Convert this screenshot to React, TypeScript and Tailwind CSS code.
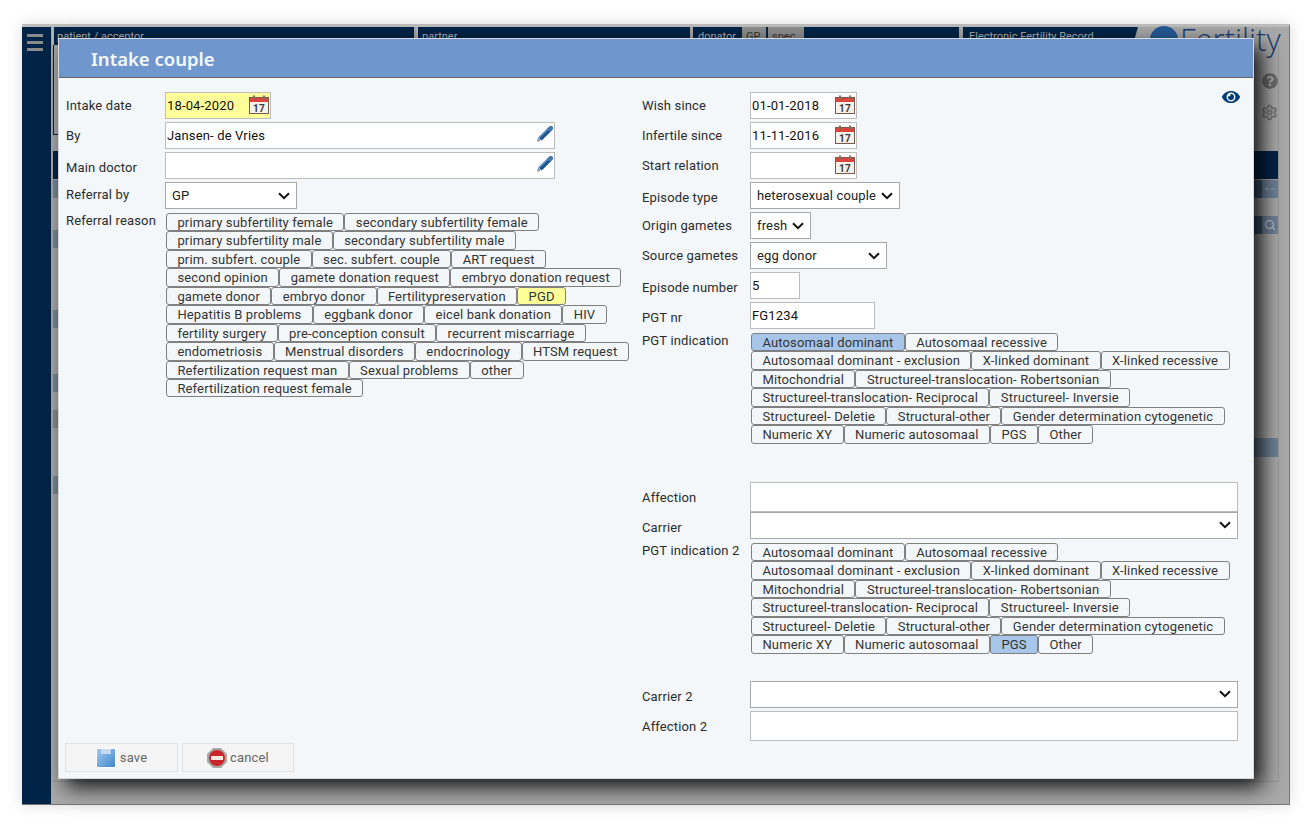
import { FaEye, FaQuestionCircle } from "react-icons/fa";
import { Minus, Plus, Search, Settings } from "lucide-react";

const referralReasons = [
  [["primary subfertility female"], ["secondary subfertility female"]],
  [["primary subfertility male"], ["secondary subfertility male"]],
  [["prim. subfert. couple"], ["sec. subfert. couple"], ["ART request"]],
  [["second opinion"], ["gamete donation request"], ["embryo donation request"]],
  [["gamete donor"], ["embryo donor"], ["Fertilitypreservation"], ["PGD", "yellow"]],
  [["Hepatitis B problems"], ["eggbank donor"], ["eicel bank donation"], ["HIV"]],
  [["fertility surgery"], ["pre-conception consult"], ["recurrent miscarriage"]],
  [["endometriosis"], ["Menstrual disorders"], ["endocrinology"], ["HTSM request"]],
  [["Refertilization request man"], ["Sexual problems"], ["other"]],
  [["Refertilization request female"]],
];

const indication = (first: string, last: string) => [
  [["Autosomaal dominant", first], ["Autosomaal recessive"]],
  [["Autosomaal dominant - exclusion"], ["X-linked dominant"], ["X-linked recessive"]],
  [["Mitochondrial"], ["Structureel-translocation- Robertsonian"]],
  [["Structureel-translocation- Reciprocal"], ["Structureel- Inversie"]],
  [["Structureel- Deletie"], ["Structural-other"], ["Gender determination cytogenetic"]],
  [["Numeric XY"], ["Numeric autosomaal"], ["PGS", last], ["Other"]],
];

function CalendarIcon() {
  return (
    <svg width="20" height="19" viewBox="0 0 20 19" className="-mt-[3px] shrink-0">
      <rect x="0.5" y="2.5" width="19" height="16" fill="#f4f1ea" stroke="#7a5a4c" />
      <rect x="1" y="3" width="18" height="4" fill="#d9443b" />
      <rect x="4" y="0.5" width="2" height="4" fill="#8a6a5c" />
      <rect x="14" y="0.5" width="2" height="4" fill="#8a6a5c" />
      <text x="10" y="16.5" textAnchor="middle" fontSize="10" fontWeight="700" fontFamily="Roboto, sans-serif" fill="#3a3a3a">
        17
      </text>
    </svg>
  );
}

function PenIcon() {
  return (
    <svg width="18" height="18" viewBox="0 0 20 20" className="-mr-px -mt-[3px] shrink-0">
      <path d="M1 19l1.5-5 3 3z" fill="#6f95b8" />
      <path d="M4.5 15.5L15.5 4.5" stroke="#1a5590" strokeWidth="5" />
      <path d="M3.5 14L14 3.5" stroke="#6f9fcd" strokeWidth="1.5" />
      <path d="M15.5 4.5l1-1" stroke="#3f78b0" strokeWidth="5" strokeLinecap="round" />
    </svg>
  );
}

function Chevron({ className }: { className: string }) {
  return (
    <svg width="12" height="8" viewBox="0 0 12 8" className={className}>
      <path d="M1 1.2l5 5 5-5" fill="none" stroke="#111" strokeWidth="2" />
    </svg>
  );
}

function SaveIcon() {
  return (
    <svg width="20" height="20" viewBox="0 0 20 20">
      <defs>
        <linearGradient id="floppy" x1="0" y1="0" x2="1" y2="1">
          <stop offset="0" stopColor="#a4cdf0" />
          <stop offset="1" stopColor="#3f85c8" />
        </linearGradient>
      </defs>
      <rect x="0.5" y="0.5" width="19" height="19" fill="url(#floppy)" stroke="#fff" />
      <rect x="5" y="1" width="10" height="5" fill="#c4dbef" />
    </svg>
  );
}

function CancelIcon() {
  return (
    <svg width="20" height="20" viewBox="0 0 20 20">
      <path d="M6 0h8l6 6v8l-6 6H6l-6-6V6z" fill="#a9a9a9" />
      <circle cx="10" cy="10" r="8" fill="#c9252b" />
      <rect x="4" y="8" width="12" height="4" fill="#f6e6e6" />
    </svg>
  );
}

function Label({ text, className = "pt-[4px]" }: { text: string; className?: string }) {
  return <div className={`shrink-0 leading-5 text-[#2b2b2b] ${className}`}>{text}</div>;
}

function Field({ width, height = "h-[27px]", value, bg = "bg-white", children }: { width: string; height?: string; value?: string; bg?: string; children?: React.ReactNode }) {
  return (
    <div className={`flex items-center justify-between border border-[#bcbcbc] pl-px pr-px text-[#111] ${width} ${height} ${bg}`}>
      <span>{value}</span>
      {children}
    </div>
  );
}

function Select({ width, value }: { width: string; value?: string }) {
  return (
    <div className={`flex h-[27px] items-center justify-between border border-[#a8a8a8] bg-white pl-[6px] pr-[6px] text-[#222] ${width}`}>
      <span>{value}</span>
      <Chevron className="shrink-0" />
    </div>
  );
}

function Tags({ rows }: { rows: string[][][] }) {
  return (
    <div className="ml-px flex flex-col">
      {rows.map((row, i) => (
        <div key={i} className="flex h-[18.45px]">
          {row.map(([text, state]) => (
            <div
              key={text}
              className={`h-[18.45px] rounded-[3px] border border-[#808080] px-[10.4px] leading-[18px] text-[#333] ${
                state === "yellow" ? "bg-[#ffff99]" : state === "blue" ? "bg-[#a8c6e9]" : ""
              }`}
            >
              {text}
            </div>
          ))}
        </div>
      ))}
    </div>
  );
}

function Row({ label, labelClass, labelWidth, className = "mb-[3px]", children }: { label: string; labelClass?: string; labelWidth: string; className?: string; children: React.ReactNode }) {
  return (
    <div className={`flex ${className}`}>
      <div className={`shrink-0 ${labelWidth}`}>
        <Label text={label} className={labelClass} />
      </div>
      {children}
    </div>
  );
}

function Modal() {
  const lw = "w-[99px]";
  const rw = "w-[108px]";
  return (
    <div className="absolute left-[58px] top-[38px] flex h-[741px] w-[1196px] flex-col border border-[#d5d9de] bg-[#f3f7fa] text-[13px] tracking-[0.15px] shadow-[8px_8px_20px_rgba(0,0,0,0.9)] [font-family:Roboto,sans-serif]">
      <div className="flex h-[39px] shrink-0 items-center border-b border-[#666] bg-[#7097cd] pl-[32px] pt-[2px] text-[18.5px] font-semibold tracking-normal text-[#f4f7fb] [font-family:'Noto_Sans',sans-serif]">
        Intake couple
      </div>
      <div className="relative flex flex-1 pt-[14px]">
        <div className="w-[576px] shrink-0 pl-[7px]">
          <Row label="Intake date" labelWidth={lw}>
            <Field width="w-[106px]" value="18-04-2020" bg="bg-[#ffff99]">
              <CalendarIcon />
            </Field>
          </Row>
          <Row label="By" labelWidth={lw}>
            <Field width="w-[390px]" value="Jansen- de Vries">
              <PenIcon />
            </Field>
          </Row>
          <Row label="Main doctor" labelClass="pt-[6px]" labelWidth={lw}>
            <Field width="w-[390px]">
              <PenIcon />
            </Field>
          </Row>
          <Row label="Referral by" labelClass="pt-[3px]" labelWidth={lw} className="mb-[4px]">
            <Select width="w-[132px]" value="GP" />
          </Row>
          <Row label="Referral reason" labelClass="-mt-[2px]" labelWidth={lw}>
            <Tags rows={referralReasons} />
          </Row>
        </div>
        <div className="flex-1 pl-[7px]">
          <Row label="Wish since" labelWidth={rw}>
            <Field width="w-[107px]" value="01-01-2018">
              <CalendarIcon />
            </Field>
          </Row>
          <Row label="Infertile since" labelWidth={rw}>
            <Field width="w-[107px]" value="11-11-2016">
              <CalendarIcon />
            </Field>
          </Row>
          <Row label="Start relation" labelWidth={rw}>
            <Field width="w-[107px]">
              <CalendarIcon />
            </Field>
          </Row>
          <Row label="Episode type" labelClass="pt-[6px]" labelWidth={rw}>
            <Select width="w-[150px]" value="heterosexual couple" />
          </Row>
          <Row label="Origin gametes" labelWidth={rw}>
            <Select width="w-[61px]" value="fresh" />
          </Row>
          <Row label="Source gametes" labelWidth={rw}>
            <Select width="w-[137px]" value="egg donor" />
          </Row>
          <Row label="Episode number" labelClass="pt-[6px]" labelWidth={rw}>
            <Field width="w-[50px]" value="5" />
          </Row>
          <Row label="PGT nr" labelClass="pt-[6px]" labelWidth={rw} className="mb-[4px]">
            <Field width="w-[125px]" value="FG1234" />
          </Row>
          <Row label="PGT indication" labelClass="-mt-[2px]" labelWidth={rw} className="mb-[38.3px]">
            <Tags rows={indication("blue", "")} />
          </Row>
          <Row label="Affection" labelClass="pt-[6px]" labelWidth={rw} className="">
            <Field width="w-[488px]" height="h-[30px]" />
          </Row>
          <Row label="Carrier" labelClass="pt-[6px]" labelWidth={rw} className="mb-[4px]">
            <Select width="w-[488px]" />
          </Row>
          <Row label="PGT indication 2" labelClass="-mt-[2px]" labelWidth={rw} className="mb-[27px]">
            <Tags rows={indication("", "blue")} />
          </Row>
          <Row label="Carrier 2" labelClass="pt-[6px]" labelWidth={rw}>
            <Select width="w-[488px]" />
          </Row>
          <Row label="Affection 2" labelClass="pt-[6px]" labelWidth={rw} className="">
            <Field width="w-[488px]" height="h-[30px]" />
          </Row>
        </div>
        <FaEye className="absolute right-[13px] top-[10px] text-[18px] text-[#003a75]" />
      </div>
      <div className="flex shrink-0 gap-[4px] pb-[6px] pl-[6px] text-[#666]">
        <div className="flex h-[29px] w-[113px] items-center justify-center gap-[4px] border border-[#e2e2e2] bg-[#f5f5f5]">
          <SaveIcon />
          save
        </div>
        <div className="flex h-[29px] w-[112px] items-center justify-center gap-[3px] border border-[#e2e2e2] bg-[#f5f5f5]">
          <CancelIcon />
          cancel
        </div>
      </div>
    </div>
  );
}

function Backdrop() {
  return (
    <div className="flex h-[781px] w-[1268px] border-r border-b border-t-[3px] border-r-[#777] border-b-[#777] border-t-[#bdbdbd] bg-[#a9a9a9] shadow-[0_0_14px_rgba(0,0,0,0.14)] [font-family:Roboto,sans-serif]">
      <div className="flex w-[29px] shrink-0 flex-col bg-[#002447] pl-[5px] pt-[7px]">
        <div className="flex w-[16px] flex-col gap-[4px]">
          <div className="h-[3px] bg-[#8b8b8b]" />
          <div className="h-[3px] bg-[#8b8b8b]" />
          <div className="h-[3px] bg-[#8b8b8b]" />
        </div>
      </div>
      <div className="flex min-w-0 flex-1 flex-col">
        <div className="flex h-[18px] shrink-0 pl-px text-[11px] leading-[20px] text-[#b5b5b5]">
          <div className="w-[362px] border-l-2 border-[#b5b5b5] bg-[#002447] pl-[3px]">patient / acceptor</div>
          <div className="ml-[2px] w-[274px] border-l-2 border-[#b5b5b5] bg-[#002447] pl-[4px]">partner</div>
          <div className="ml-[3px] w-[49px] bg-[#002447] pl-[5px]">donator</div>
          <div className="w-[24px] bg-[#8f8f8f] pl-[4px] text-[#333]">GP</div>
          <div className="w-[2px] bg-[#002447]" />
          <div className="w-[36px] bg-[#8f8f8f] pl-[4px] text-[#333]">spec</div>
          <div className="w-[155px] bg-[#002447]" />
          <div className="ml-[4px] w-[175px] bg-[#002447] pl-[6px] [clip-path:polygon(0_0,100%_0,97%_100%,0_100%)]">Electronic Fertility Record</div>
          <div className="ml-[12px] mt-[-1px] h-[28px] w-[28px] shrink-0 rounded-full bg-[#245a96]" />
          <div className="ml-[2px] mt-[-9px] shrink-0 text-[31px] font-light leading-[42px] text-[#1a3f70] [font-family:'Open_Sans',sans-serif]">Fertility</div>
        </div>
        <div className="mb-[22px] mr-[10px] ml-[2px] flex flex-1 flex-col border-b border-r border-[#999]">
          <div className="flex h-[90px] shrink-0">
            <div className="flex-1 border-b border-l border-[#002447]" />
            <div className="flex w-[24px] flex-col items-end gap-[15px] pt-[28px]">
              <FaQuestionCircle className="text-[16px] text-[#6b6b6b]" />
              <Settings size={17} strokeWidth={2.6} className="text-[#777]" />
            </div>
          </div>
          <div className="mt-[16px] h-[28px] shrink-0 bg-[#002447]" />
          <div className="flex flex-1 justify-between pt-px">
            <div className="flex w-[5px] flex-col">
              <div className="h-[18px] bg-[#7a8799]" />
              <div className="mt-[32px] h-[18px] bg-[#7a8799]" />
              <div className="mt-[62px] h-[18px] bg-[#7a8799]" />
              <div className="mt-[46px] h-[18px] bg-[#7a8799]" />
              <div className="mt-[18px] h-[18px] bg-[#8a8a8a]" />
              <div className="mt-[48px] h-[18px] bg-[#7a8799]" />
            </div>
            <div className="flex w-[24px] flex-col items-end">
              <div className="flex h-[18px] w-[24px] items-center justify-end border-l-[8px] border-[#3f5878] bg-[#6f8299] pr-[2px] text-[#a6b1bd]">
                <Plus size={6} strokeWidth={3} />
                <Minus size={6} strokeWidth={3} />
              </div>
              <div className="mt-[18px] flex h-[18px] w-[24px] items-center justify-center border-l-[8px] border-[#3f5878] bg-[#6f8299] text-[#b4bcc6]">
                <Search size={12} strokeWidth={3} />
              </div>
              <div className="mt-[204px] h-[19px] w-[24px] bg-[#6f8299]" />
            </div>
          </div>
        </div>
      </div>
    </div>
  );
}

export default function App() {
  return (
    <div className="relative h-[827px] w-[1312px] overflow-hidden bg-white pl-[22px] pt-[24px]">
      <Backdrop />
      <Modal />
    </div>
  );
}
